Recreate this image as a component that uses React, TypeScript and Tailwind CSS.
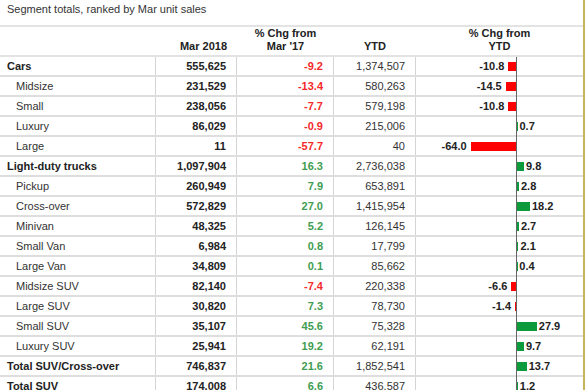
import React from 'react'

type Row = {
  label: string
  bold?: boolean
  mar: string
  chg: number
  ytd: string
  ytdChg: number
}

const rows: Row[] = [
  { label: 'Cars', bold: true, mar: '555,625', chg: -9.2, ytd: '1,374,507', ytdChg: -10.8 },
  { label: 'Midsize', mar: '231,529', chg: -13.4, ytd: '580,263', ytdChg: -14.5 },
  { label: 'Small', mar: '238,056', chg: -7.7, ytd: '579,198', ytdChg: -10.8 },
  { label: 'Luxury', mar: '86,029', chg: -0.9, ytd: '215,006', ytdChg: 0.7 },
  { label: 'Large', mar: '11', chg: -57.7, ytd: '40', ytdChg: -64.0 },
  { label: 'Light-duty trucks', bold: true, mar: '1,097,904', chg: 16.3, ytd: '2,736,038', ytdChg: 9.8 },
  { label: 'Pickup', mar: '260,949', chg: 7.9, ytd: '653,891', ytdChg: 2.8 },
  { label: 'Cross-over', mar: '572,829', chg: 27.0, ytd: '1,415,954', ytdChg: 18.2 },
  { label: 'Minivan', mar: '48,325', chg: 5.2, ytd: '126,145', ytdChg: 2.7 },
  { label: 'Small Van', mar: '6,984', chg: 0.8, ytd: '17,799', ytdChg: 2.1 },
  { label: 'Large Van', mar: '34,809', chg: 0.1, ytd: '85,662', ytdChg: 0.4 },
  { label: 'Midsize SUV', mar: '82,140', chg: -7.4, ytd: '220,338', ytdChg: -6.6 },
  { label: 'Large SUV', mar: '30,820', chg: 7.3, ytd: '78,730', ytdChg: -1.4 },
  { label: 'Small SUV', mar: '35,107', chg: 45.6, ytd: '75,328', ytdChg: 27.9 },
  { label: 'Luxury SUV', mar: '25,941', chg: 19.2, ytd: '62,191', ytdChg: 9.7 },
  { label: 'Total SUV/Cross-over', bold: true, mar: '746,837', chg: 21.6, ytd: '1,852,541', ytdChg: 13.7 },
  { label: 'Total SUV', bold: true, mar: '174,008', chg: 6.6, ytd: '436,587', ytdChg: 1.2 },
]

// px per percentage point on the ytd bar
const SCALE = 0.71

function Bar({ v }: { v: number }) {
  const w = Math.abs(v) * SCALE
  const label = v.toFixed(1)
  if (v < 0) {
    return (
      <div className="flex h-full items-center">
        <div className="flex w-[100px] items-center justify-end gap-[4px]">
          <span className="font-bold text-[#222]">{label}</span>
          <div className="h-[9px] bg-[#ff0000]" style={{ width: w }} />
        </div>
      </div>
    )
  }
  return (
    <div className="flex h-full items-center">
      <div className="w-[101px]" />
      <div className="flex items-center gap-[2px]">
        <div className="h-[9px] bg-[#0b9a3c]" style={{ width: w < 1 ? Math.max(w, 0) : w }} />
        <span className="font-bold text-[#222]">{label}</span>
      </div>
    </div>
  )
}

export default function App() {
  return (
    <div
      className="h-[390px] w-[585px] overflow-hidden border-r-2 border-[#c8b45a] bg-white text-[11px] leading-[13px] text-[#333]"
      style={{ fontFamily: '"Liberation Sans", Arial, sans-serif' }}
    >
      <div className="h-[25px] pl-[7px] pt-[3px] text-[#333]">Segment totals, ranked by Mar unit sales</div>

      <div className="grid h-[32px] grid-cols-[156px_81px_97px_82px_167px] border-y-2 border-[#e3e3e3] font-bold text-[#222]">
        <div />
        <div className="flex items-end justify-end pb-[3px] pr-[10px]">Mar 2018</div>
        <div className="flex flex-col items-center justify-end pb-[3px] text-center">
          <span>% Chg from</span>
          <span>Mar '17</span>
        </div>
        <div className="flex items-end justify-center pb-[3px]">YTD</div>
        <div className="flex flex-col items-center justify-end pb-[3px] text-center">
          <span>% Chg from</span>
          <span>YTD</span>
        </div>
      </div>

      <div className="relative">
        {rows.map(r => (
          <div
            key={r.label}
            className="grid h-[20px] grid-cols-[156px_81px_97px_82px_167px] border-b-2 border-[#dedede]"
          >
            <div
              className={`flex items-center border-r border-[#d4d4d4] ${
                r.bold ? 'pl-[7px] font-bold text-[#222]' : 'pl-[16px]'
              }`}
            >
              {r.label}
            </div>
            <div className="flex items-center justify-end border-r border-[#d4d4d4] pr-[10px] font-bold text-[#222]">
              {r.mar}
            </div>
            <div
              className={`flex items-center justify-end border-r border-[#d4d4d4] pr-[10px] font-bold ${
                r.chg < 0 ? 'text-[#f42a2a]' : 'text-[#3f9d52]'
              }`}
            >
              {r.chg.toFixed(1)}
            </div>
            <div className="flex items-center justify-end border-r border-[#d4d4d4] pr-[10px] text-[#333]">
              {r.ytd}
            </div>
            <Bar v={r.ytdChg} />
          </div>
        ))}
        <div className="absolute bottom-0 left-[516px] top-0 w-px bg-[#666]" />
      </div>
    </div>
  )
}
